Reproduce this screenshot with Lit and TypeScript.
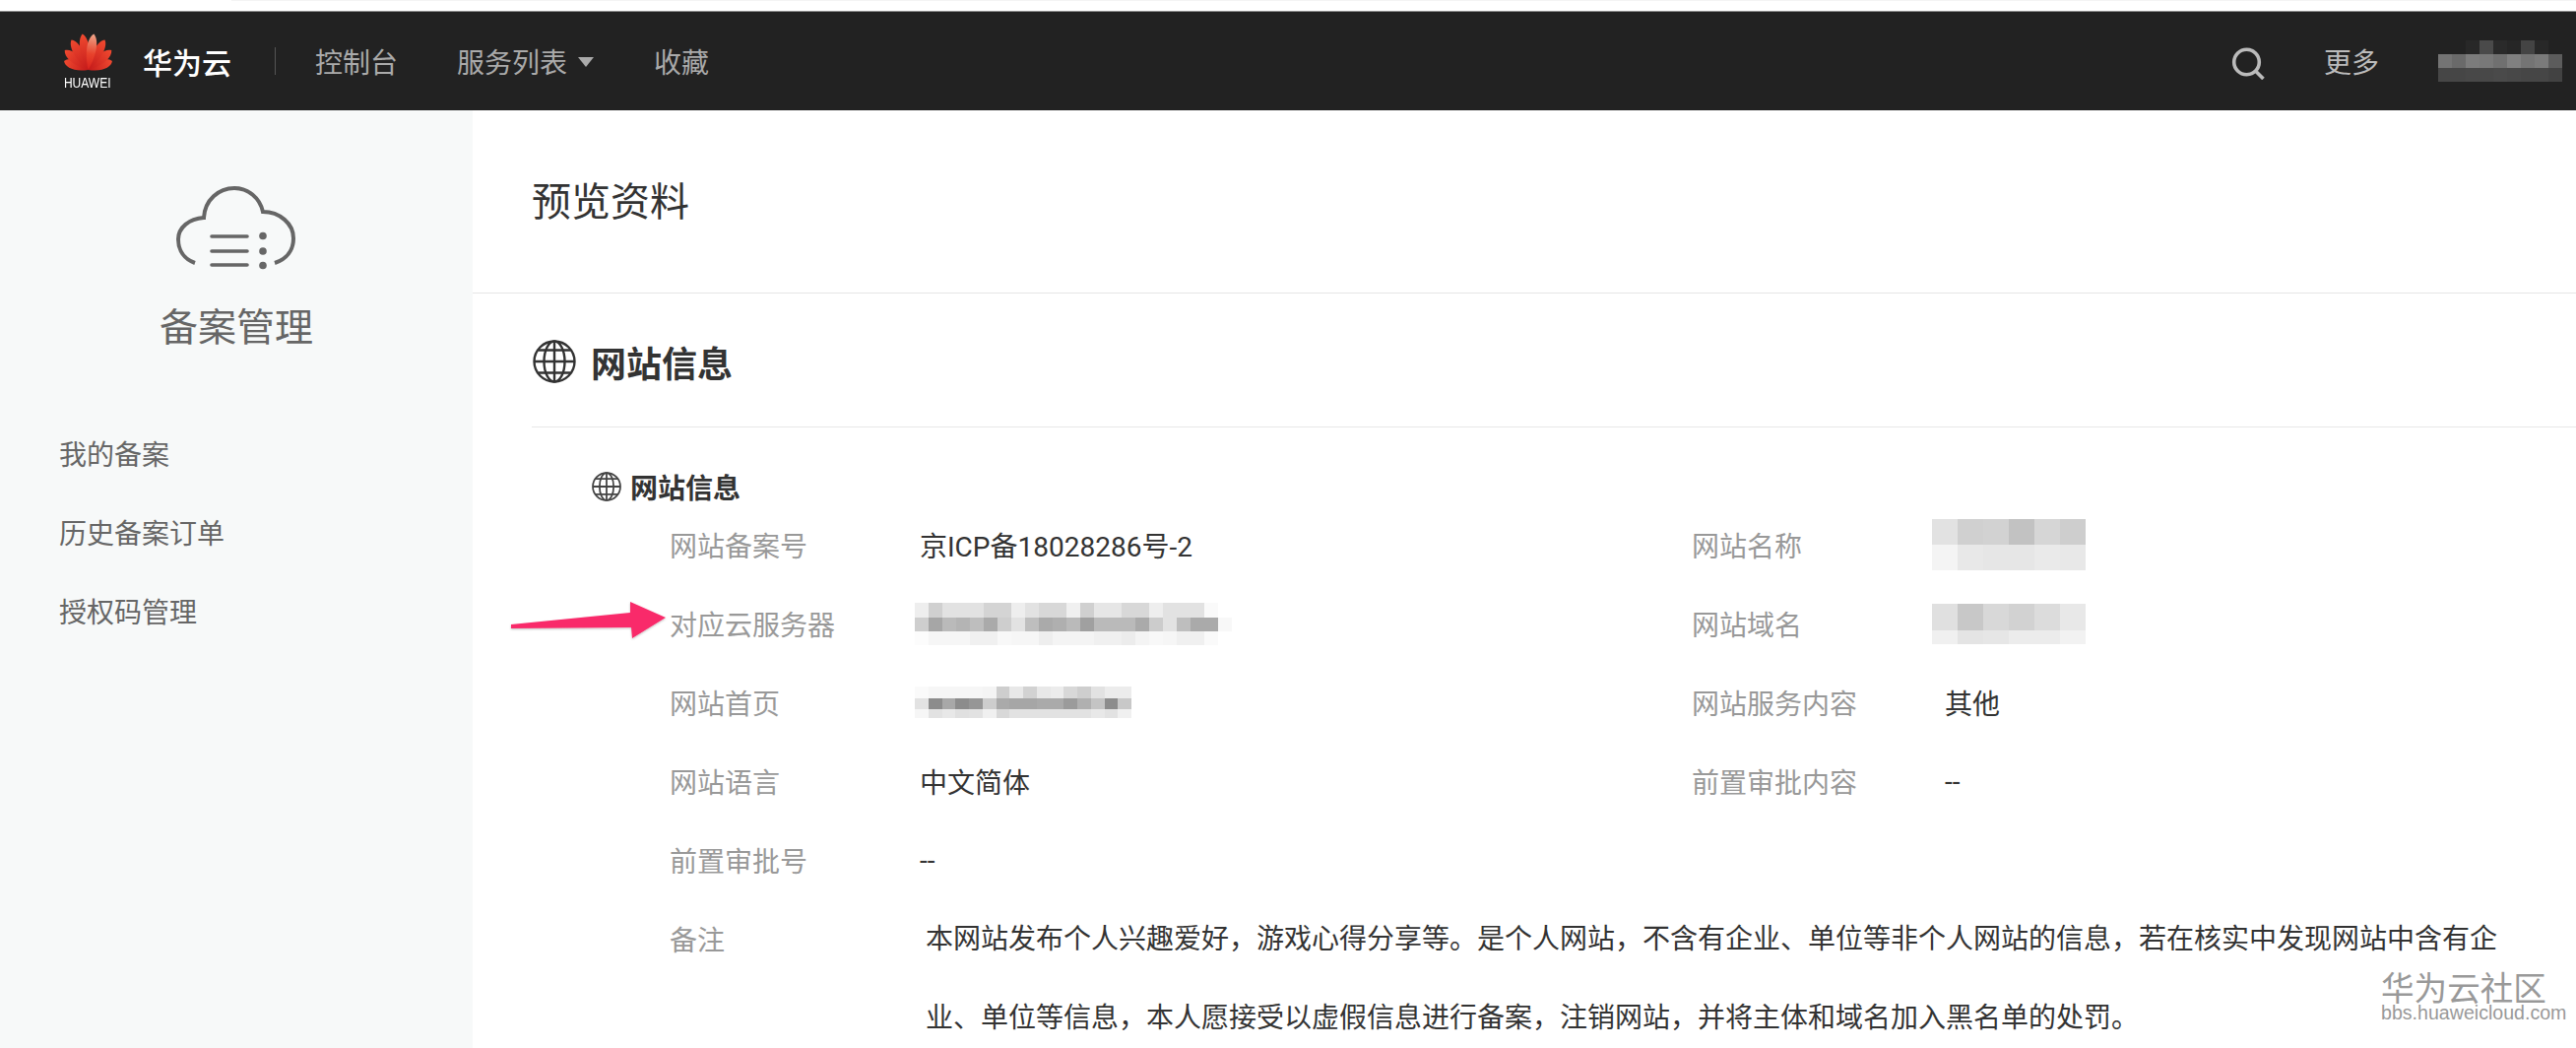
import { LitElement, html, css, svg } from "lit";
import { customElement, property } from "lit/decorators.js";

@customElement("mosaic-block")
class MosaicBlock extends LitElement {
  @property({ type: Array }) rows: number[][] = [];
  @property({ type: Array }) heights: number[] = [];
  @property({ type: Number }) cell = 14;
  static styles = css`
    :host { display: block; filter: blur(0.7px); }
    .row { display: flex; }
    .c { flex: none; }
  `;
  render() {
    return html`${this.rows.map(
      (r, i) => html`<div class="row" style="height:${this.heights[i]}px">
        ${r.map((g) => html`<div class="c" style="width:${this.cell}px;background:rgb(${g},${g},${g})"></div>`)}
      </div>`
    )}`;
  }
}

const globe = (size: number, sw: number, color: string) => html`
  <svg width=${size} height=${size} viewBox="0 0 44 44" fill="none" stroke=${color} stroke-width=${sw}>
    <circle cx="22" cy="22" r="20.5"></circle>
    <ellipse cx="22" cy="22" rx="10.5" ry="20.5"></ellipse>
    <path d="M22 1.5V42.5M1.5 22H42.5M5.5 10.5H38.5M5.5 33.5H38.5"></path>
  </svg>`;

const petal = (angle: number, len: number, w: number, fill: string) => svg`
  <path transform=${`rotate(${angle} 25.5 38)`} d=${`M25.5 38C${25.5 - w} ${38 - len * 0.5} ${25.5 - w * 0.8} ${38 - len * 0.88} 25.5 ${38 - len}C${25.5 + w * 0.8} ${38 - len * 0.88} ${25.5 + w} ${38 - len * 0.5} 25.5 38Z`} fill=${fill}></path>`;

const M1 = [
  [238,208,226,226,226,212,212,238,226,216,216,240,208,230,230,216,216,238,226,226,226,250,255],
  [206,166,186,180,190,170,206,226,190,170,175,186,160,186,186,186,170,204,226,190,170,170,248],
  [252,246,246,246,240,240,248,246,246,238,244,244,244,240,240,236,244,248,246,240,240,250,255],
];
const M2 = [
  [250,246,246,246,246,244,206,232,210,232,236,216,206,226,236,236],
  [226,140,168,140,150,205,170,166,166,170,170,155,176,196,140,200],
  [246,226,232,224,226,240,216,226,226,226,226,226,226,232,226,240],
];
const M3 = [
  [226,208,210,194,214,206],
  [244,232,230,230,234,232],
];
const M4 = [
  [224,200,216,210,220,232],
  [240,228,230,236,236,242],
];
const M5 = [
  [34,34,40,74,42,38,68,40,34],
  [116,106,124,120,112,128,116,122,92],
  [70,70,72,72,74,72,70,70,66],
];

@customElement("app-root")
class AppRoot extends LitElement {
  static styles = css`
    :host {
      display: block; position: relative; width: 2616px; height: 1064px; overflow: hidden; background: #fff;
      font-family: Roboto, "Noto Sans CJK SC", sans-serif; color: #333;
    }
    .strip { height: 11px; background: #fff; display: flex; justify-content: flex-end; }
    .strip i { display: block; width: 2381px; height: 1px; background: #f4f4f4; }
    header {
      box-sizing: border-box; height: 101px; border-top: 1px solid #8e8e8e; background: #222;
      display: flex; align-items: center; padding-left: 62px; padding-right: 14px; color: #aaa; font-size: 28px;
    }
    .logo { flex: none; width: 54px; display: flex; flex-direction: column; align-items: center; margin-right: 29px; }
    .logo span { font: 14px/14px "Liberation Sans", sans-serif; color: #fff; margin-top: 3px; transform: scaleX(0.86); }
    .brand { font-size: 30px; font-weight: 500; color: #fff; width: 91px; white-space: nowrap; }
    .sep { width: 1px; height: 28px; background: #555; margin: 0 40px 0 43px; }
    .nav { white-space: nowrap; }
    .nav.c { width: 84px; margin-right: 60px; }
    .nav.s { display: flex; align-items: center; margin-right: 61px; }
    .tri { width: 0; height: 0; border: 8px solid transparent; border-top: 10px solid #aaa; border-bottom: 0; margin-left: 11px; margin-top: 2px; }
    .spacer { flex: 1; }
    .search { display: block; margin: 4px 60px 0 0; }
    .more { color: #bbb; margin-right: 60px; }
    .body { display: flex; height: 952px; }
    aside { flex: none; box-sizing: border-box; width: 480px; background: #f7f9f9; color: #666; }
    .ahead { display: flex; flex-direction: column; align-items: center; padding-top: 77px; }
    .ahead h2 { margin: 30px 0 0; font-size: 39px; font-weight: 400; line-height: 56px; }
    .menu { margin-top: 62px; padding-left: 60px; font-size: 28px; }
    .menu div { height: 80px; line-height: 80px; }
    main { flex: 1; min-width: 0; }
    .title { box-sizing: border-box; height: 186px; border-bottom: 1px solid #e6e6e6; padding: 0 0 6px 60px; display: flex; align-items: center; font-size: 40px; font-weight: 400; color: #333; }
    .sec { margin-left: 60px; }
    .sech { box-sizing: border-box; height: 136px; border-bottom: 1px solid #e8e8e8; display: flex; align-items: center; gap: 15px; font-size: 36px; font-weight: 700; color: #333; padding: 3px 0 0 1px; }
    .sub { box-sizing: border-box; display: flex; align-items: center; gap: 9px; height: 80px; padding: 40px 0 0 61px; font-size: 28px; font-weight: 700; color: #333; }
    .grid { display: grid; grid-template-columns: 254px 784px 257px 1fr; grid-auto-rows: 80px; margin: -1px 0 0 140px; align-items: center; font-size: 28px; }
    .l { color: #999; white-space: nowrap; }
    .v { color: #333; white-space: nowrap; }
    .m1 { margin-left: -5px; }
    .m2 { margin-left: -13px; }
    .note { grid-column: 2 / 5; align-self: start; line-height: 80px; padding: 1px 0 0 6px; width: 1600px; color: #333; }
    .note-l { align-self: start; line-height: 80px; padding-top: 3px; }
    .arrow { position: absolute; left: 510px; top: 604px; }
    .wm { position: absolute; left: 2418px; top: 985px; color: #999; }
    .wm b { display: block; font-weight: 400; font-size: 33.6px; line-height: 34px; font-family: "Noto Sans CJK SC", sans-serif; }
    .wm span { display: block; font: 19.6px/18px "Liberation Sans", sans-serif; }
  `;
  render() {
    return html`
      <div class="strip"><i></i></div>
      <header>
        <div class="logo">
          <svg width="51" height="41" viewBox="0 0 51 41">
            <defs>
              <linearGradient id="pt" x1="0" y1="0" x2="0" y2="1">
                <stop offset="0" stop-color="#f0a88c"></stop><stop offset=".55" stop-color="#e8432c"></stop><stop offset="1" stop-color="#d9201c"></stop>
              </linearGradient>
              <linearGradient id="pr" x1="0" y1="0" x2="0" y2="1">
                <stop offset="0" stop-color="#f04a30"></stop><stop offset="1" stop-color="#c41a1a"></stop>
              </linearGradient>
            </defs>
            ${petal(-70, 26, 7, "url(#pr)")}${petal(70, 26, 7, "url(#pr)")}
            ${petal(-50, 31, 7, "url(#pr)")}${petal(50, 31, 7, "url(#pr)")}
            ${petal(-29, 35, 7, "url(#pr)")}${petal(29, 35, 7, "url(#pr)")}
            ${petal(-9, 37, 7, "url(#pr)")}${petal(9, 37, 7, "url(#pt)")}
          </svg>
          <span>HUAWEI</span>
        </div>
        <div class="brand">华为云</div>
        <div class="sep"></div>
        <div class="nav c">控制台</div>
        <div class="nav s">服务列表<span class="tri"></span></div>
        <div class="nav">收藏</div>
        <div class="spacer"></div>
        <svg class="search" width="34" height="33" viewBox="0 0 34 33" fill="none" stroke="#bbb" stroke-width="3.6">
          <circle cx="15.500" cy="15" r="12.800"></circle><path d="M24.500 24L32.500 32"></path>
        </svg>
        <div class="more">更多</div>
        <mosaic-block .rows=${M5} .heights=${[14, 14, 14]} .cell=${14}></mosaic-block>
      </header>
      <div class="body">
        <aside>
          <div class="ahead">
            <svg width="122" height="86" viewBox="0 0 122 86" fill="none" stroke="#666" stroke-width="4">
              <path d="M19 78C8 74 2 65 2 54C2 42 13 33 28 32C29 14 43 2 59 2C73 2 85 12 88 26C105 26 119 38 119 53C119 65 112 74 100 78"></path>
              <path d="M36 51H72M36 66H72M36 80H72" stroke-linecap="round" stroke-width="3.6"></path>
              <circle cx="88" cy="50.500" r="3.800" fill="#666" stroke="none"></circle>
              <circle cx="88" cy="66" r="3.800" fill="#666" stroke="none"></circle>
              <circle cx="88" cy="80.500" r="3.800" fill="#666" stroke="none"></circle>
            </svg>
            <h2>备案管理</h2>
          </div>
          <div class="menu"><div>我的备案</div><div>历史备案订单</div><div>授权码管理</div></div>
        </aside>
        <main>
          <div class="title">预览资料</div>
          <div class="sec">
            <div class="sech">${globe(44, 2.4, "#333")}<span>网站信息</span></div>
            <div class="sub">${globe(30, 2.6, "#444")}<span>网站信息</span></div>
            <div class="grid">
              <div class="l">网站备案号</div><div class="v">京ICP备18028286号-2</div>
              <div class="l">网站名称</div><mosaic-block class="m2" .rows=${M3} .heights=${[26, 26]} .cell=${26}></mosaic-block>
              <div class="l">对应云服务器</div><mosaic-block class="m1" .rows=${M1} .heights=${[15, 14, 14]} .cell=${14}></mosaic-block>
              <div class="l">网站域名</div><mosaic-block class="m2" .rows=${M4} .heights=${[27, 14]} .cell=${26}></mosaic-block>
              <div class="l">网站首页</div><mosaic-block class="m1" .rows=${M2} .heights=${[12, 11, 9]} .cell=${13.75}></mosaic-block>
              <div class="l">网站服务内容</div><div class="v">其他</div>
              <div class="l">网站语言</div><div class="v">中文简体</div>
              <div class="l">前置审批内容</div><div class="v">--</div>
              <div class="l">前置审批号</div><div class="v">--</div><div></div><div></div>
              <div class="l note-l">备注</div>
              <div class="note">本网站发布个人兴趣爱好，游戏心得分享等。是个人网站，不含有企业、单位等非个人网站的信息，若在核实中发现网站中含有企业、单位等信息，本人愿接受以虚假信息进行备案，注销网站，并将主体和域名加入黑名单的处罚。</div>
            </div>
          </div>
        </main>
      </div>
      <svg class="arrow" width="172" height="50" viewBox="0 0 172 50">
        <defs><filter id="sh" x="-10%" y="-30%" width="120%" height="160%"><feDropShadow dx="0" dy="1" stdDeviation="1.200" flood-color="#000" flood-opacity=".25"></feDropShadow></filter></defs>
        <path d="M9 30L130 18L130 7L166 23L132 44L131 33L9 34Z" fill="#f92c6b" filter="url(#sh)"></path>
      </svg>
      <div class="wm"><b>华为云社区</b><span>bbs.huaweicloud.com</span></div>
    `;
  }
}
